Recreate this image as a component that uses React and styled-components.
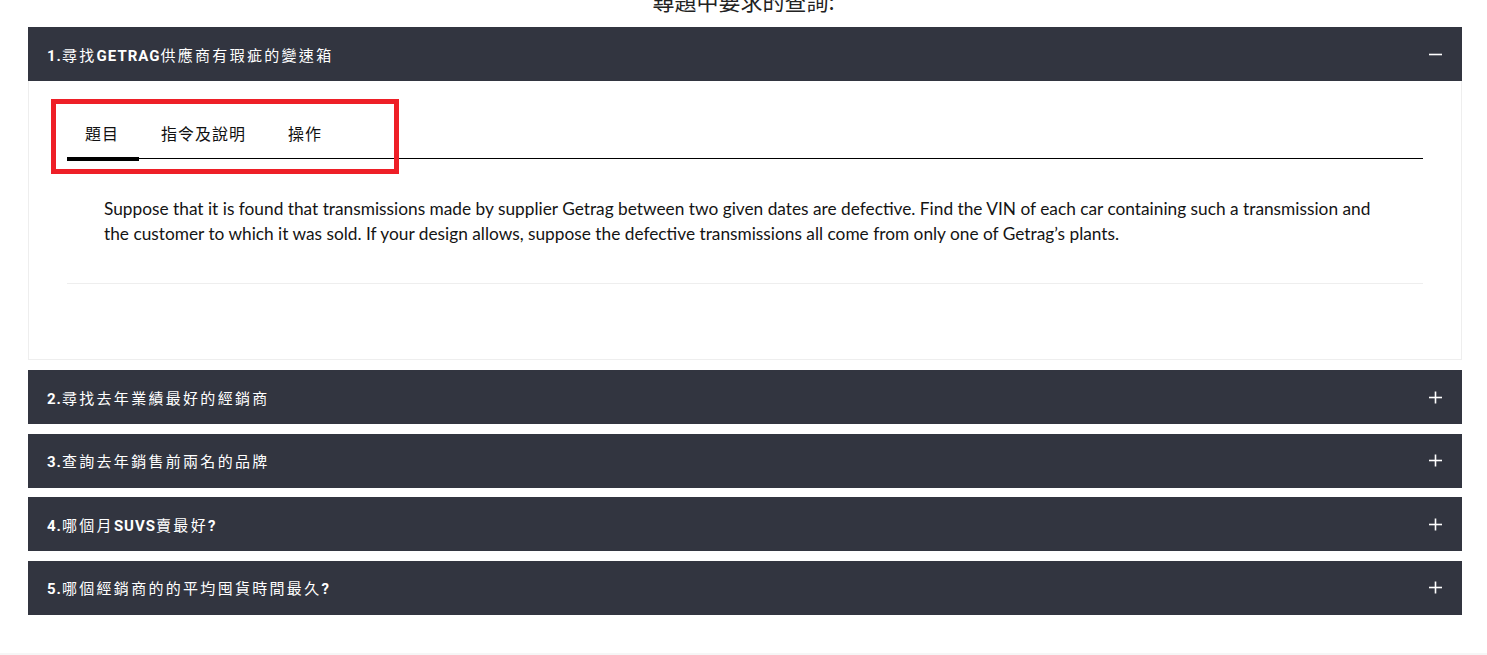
import React, { useState } from 'react'
import styled, { createGlobalStyle } from 'styled-components'

const GlobalStyle = createGlobalStyle`
    html, body {
        margin: 0;
        padding: 0;
        background: #fff;
        overflow: hidden;
    }
    body {
        font-family: "Noto Sans CJK TC", "Noto Sans", sans-serif;
    }
`;

const Page = styled.div`
    width: 1487px;
    height: 655px;
    overflow: hidden;
    display: flex;
    flex-direction: column;
`;

const Intro = styled.div`
    margin-top: -13px;
    height: 26px;
    margin-bottom: 14px;
    text-align: center;
    font-family: "Noto Sans CJK TC", sans-serif;
    font-size: 22px;
    line-height: 26px;
    color: #222;
`;

const Accordion = styled.div`
    padding: 0 25px 0 28px;
    display: flex;
    flex-direction: column;
`;

const Item = styled.div`
    margin-bottom: ${p => (p.$open ? '10px' : '9.5px')};
`;

const Bar = styled.div`
    height: 54px;
    background: #323540;
    display: flex;
    align-items: center;
    justify-content: space-between;
    padding: 0 20px 0 19px;
    cursor: pointer;
`;

const Title = styled.span`
    color: #fff;
    font-family: "Noto Sans CJK TC", sans-serif;
    font-size: 15px;
    letter-spacing: 2.3px;
    white-space: nowrap;
`;

const Latin = styled.span`
    font-family: "Roboto", "Liberation Sans", sans-serif;
    font-weight: 700;
    font-size: 15px;
    letter-spacing: 1px;
`;

const Toggle = styled.svg`
    width: 13px;
    height: 13px;
    display: block;
`;

const Panel = styled.div`
    border: 1px solid #eee;
    border-top: none;
    padding: 27px 38px 75px;
    position: relative;
`;

const TabNav = styled.div`
    display: flex;
    gap: 4px;
    border-bottom: 1px solid #000;
`;

const Tab = styled.div`
    position: relative;
    height: 50px;
    padding: 0 20px 0 18px;
    display: flex;
    align-items: center;
    font-family: "Noto Sans CJK TC", sans-serif;
    font-size: 16px;
    letter-spacing: 1px;
    color: #111;
    cursor: pointer;

    &::after {
        content: '';
        position: absolute;
        left: 0;
        right: 0;
        bottom: -3px;
        height: 4px;
        background: ${p => (p.$active ? '#000' : 'transparent')};
    }
`;

const TabBody = styled.div`
    padding: 37px 40px 37px 37px;
    border-bottom: 1px solid #eee;
`;

const Question = styled.p`
    margin: 0;
    font-family: "Lato", "Liberation Sans", sans-serif;
    font-size: 17.3px;
    line-height: 25px;
    color: #141414;
`;

const Highlight = styled.div`
    position: absolute;
    left: 22px;
    top: 18px;
    width: 348px;
    height: 75px;
    box-sizing: border-box;
    border: 5px solid #ee1f27;
    pointer-events: none;
`;

const Footer = styled.div`
    margin-top: auto;
    height: 2px;
    background: #f6f6f6;
`;

const items = [
    '1.尋找GETRAG供應商有瑕疵的變速箱',
    '2.尋找去年業績最好的經銷商',
    '3.查詢去年銷售前兩名的品牌',
    '4.哪個月SUVS賣最好?',
    '5.哪個經銷商的的平均囤貨時間最久?',
];

const tabs = ['題目', '指令及說明', '操作'];

function renderTitle(text) {
    return text.split(/([0-9A-Za-z.?]+)/).filter(Boolean).map((part, i) =>
        /^[0-9A-Za-z.?]+$/.test(part) ? <Latin key={i}>{part}</Latin> : <span key={i}>{part}</span>
    );
}

function Icon({ open }) {
    return (
        <Toggle viewBox="0 0 13 13">
            <line x1="0" y1="6.5" x2="13" y2="6.5" stroke="#fff" strokeWidth="1.6" />
            {!open && <line x1="6.5" y1="0.5" x2="6.5" y2="12.5" stroke="#fff" strokeWidth="1.6" />}
        </Toggle>
    );
}

export default function App() {
    const [open, setOpen] = useState(0);
    const [tab, setTab] = useState(0);

    return (
        <Page>
            <GlobalStyle />
            <Intro>尋題中要求的查詢:</Intro>
            <Accordion>
                {items.map((title, i) => (
                    <Item key={i} $open={open === i}>
                        <Bar onClick={() => setOpen(open === i ? -1 : i)}>
                            <Title>{renderTitle(title)}</Title>
                            <Icon open={open === i} />
                        </Bar>
                        {open === i && (
                            <Panel>
                                <TabNav>
                                    {tabs.map((t, j) => (
                                        <Tab key={t} $active={tab === j} onClick={() => setTab(j)}>{t}</Tab>
                                    ))}
                                </TabNav>
                                <TabBody>
                                    <Question>
                                        Suppose that it is found that transmissions made by supplier Getrag between two given dates are defective. Find the VIN of each car containing such a transmission and the customer to which it was sold. If your design allows, suppose the defective transmissions all come from only one of Getrag’s plants.
                                    </Question>
                                </TabBody>
                                <Highlight />
                            </Panel>
                        )}
                    </Item>
                ))}
            </Accordion>
            <Footer />
        </Page>
    )
}
